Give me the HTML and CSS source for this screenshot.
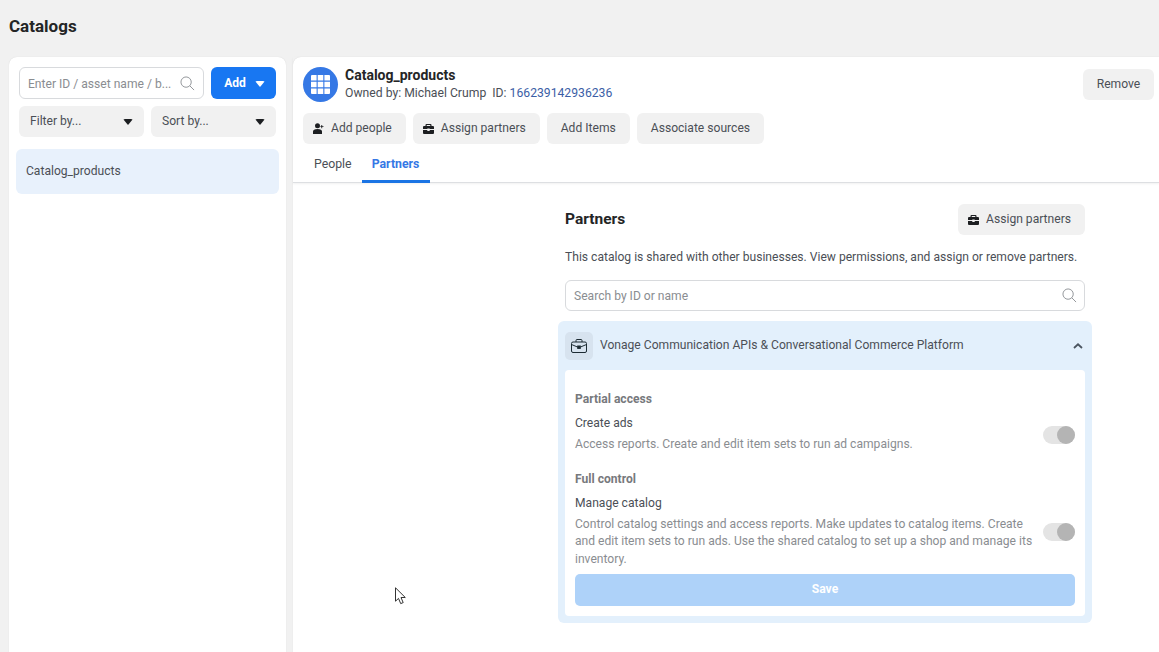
FILE: index.html
```html
<!DOCTYPE html>
<html lang="en">
<head>
    <meta charset="UTF-8">
    <meta name="viewport" content="width=device-width, initial-scale=1.0">
    <title>Catalogs</title>
    <link rel="stylesheet" href="styles.css">
</head>
<body>
    <h1 class="page-title">Catalogs</h1>
    <div class="columns">
        <aside class="side">
            <div class="side-row">
                <div class="search side-search">
                    <span class="placeholder">Enter ID / asset name / b...</span>
                    <svg class="search-icon" width="15" height="15" viewBox="0 0 16 16"><circle cx="6.500" cy="6.500" r="5.500"/><path d="M10.500 10.500L15 15"/></svg>
                </div>
                <button class="btn primary">Add <span class="caret white"></span></button>
            </div>
            <div class="side-row">
                <button class="btn select">Filter by... <span class="caret"></span></button>
                <button class="btn select">Sort by... <span class="caret"></span></button>
            </div>
            <div class="side-item">Catalog_products</div>
        </aside>
        <main class="detail">
            <header class="detail-head">
                <div class="head-top">
                    <div class="asset">
                        <div class="asset-icon">
                            <svg width="19" height="19" viewBox="0 0 19 19"><path fill="#fff" d="M1 0h4.600v5.600H0V1a1 1 0 0 1 1-1zM6.700 0h5.600v5.600H6.700zM13.400 0H18a1 1 0 0 1 1 1v4.600h-5.600zM0 6.700h5.600v5.600H0zM6.700 6.700h5.600v5.600H6.700zM13.400 6.700H19v5.600h-5.600zM0 13.400h5.600V19H1a1 1 0 0 1-1-1zM6.700 13.400h5.600V19H6.700zM13.400 13.400H19V18a1 1 0 0 1-1 1h-4.600z"/></svg>
                        </div>
                        <div class="asset-info">
                            <div class="asset-name">Catalog_products</div>
                            <div class="asset-owner">Owned by: Michael Crump &nbsp;ID: <a class="asset-id">166239142936236</a></div>
                        </div>
                    </div>
                    <button class="btn remove">Remove</button>
                </div>
                <div class="actions">
                    <button class="btn icon-btn">
                        <svg width="11" height="11" viewBox="0 0 11 11"><circle cx="4.500" cy="2.800" r="2.500"/><path d="M0 11V8.600C0 6.900 1.500 6 4.500 6S9 6.900 9 8.600V11zM8.300 2h.9v1.200h1.300v.9H9.200v1.200h-.9V4.100H7.400v-.9h.9z"/></svg>
                        Add people
                    </button>
                    <button class="btn icon-btn">
                        <svg width="11" height="10" viewBox="0 0 11 10"><path fill-rule="evenodd" d="M3.500 0h4a1 1 0 0 1 1 1v1H10a1 1 0 0 1 1 1v2H6.700v-.6H4.300V5H0V3a1 1 0 0 1 1-1h1.500V1a1 1 0 0 1 1-1zm.2 1.100V2h3.600v-.9zM0 6h4.300v1h2.400V6H11v3a1 1 0 0 1-1 1H1a1 1 0 0 1-1-1z"/></svg>
                        Assign partners
                    </button>
                    <button class="btn">Add Items</button>
                    <button class="btn">Associate sources</button>
                </div>
                <nav class="tabs">
                    <a class="tab">People</a>
                    <a class="tab active">Partners</a>
                </nav>
            </header>
            <section class="partners">
                <div class="partners-head">
                    <h2 class="partners-title">Partners</h2>
                    <button class="btn icon-btn">
                        <svg width="11" height="10" viewBox="0 0 11 10"><path fill-rule="evenodd" d="M3.500 0h4a1 1 0 0 1 1 1v1H10a1 1 0 0 1 1 1v2H6.700v-.6H4.300V5H0V3a1 1 0 0 1 1-1h1.500V1a1 1 0 0 1 1-1zm.2 1.100V2h3.600v-.9zM0 6h4.300v1h2.400V6H11v3a1 1 0 0 1-1 1H1a1 1 0 0 1-1-1z"/></svg>
                        Assign partners
                    </button>
                </div>
                <p class="partners-desc">This catalog is shared with other businesses. View permissions, and assign or remove partners.</p>
                <div class="search partner-search">
                    <span class="placeholder">Search by ID or name</span>
                    <svg class="search-icon" width="15" height="15" viewBox="0 0 16 16"><circle cx="6.500" cy="6.500" r="5.500"/><path d="M10.500 10.500L15 15"/></svg>
                </div>
                <div class="accordion">
                    <div class="accordion-head">
                        <div class="case-box">
                            <svg width="16" height="14" viewBox="0 0 16 14" fill="none" stroke="#1c2b33" stroke-width="1"><rect x=".5" y="3" width="15" height="10.500" rx="1.500"/><path d="M5 3V1.500a1 1 0 0 1 1-1h4a1 1 0 0 1 1 1V3M.5 5.500L6.500 8M15.500 5.500L9.500 8"/><rect x="6.700" y="7" width="2.600" height="2.400" fill="#1c2b33"/></svg>
                        </div>
                        <span class="accordion-name">Vonage Communication APIs &amp; Conversational Commerce Platform</span>
                        <svg class="chevron" width="10" height="6" viewBox="0 0 10 6"><path d="M1 5l4-3.700L9 5" fill="none" stroke="#4b5560" stroke-width="1.800"/></svg>
                    </div>
                    <div class="accordion-body">
                        <h3 class="perm-group">Partial access</h3>
                        <div class="perm">
                            <div class="perm-text">
                                <div class="perm-name">Create ads</div>
                                <div class="perm-desc">Access reports. Create and edit item sets to run ad campaigns.</div>
                            </div>
                            <span class="toggle"><span class="knob"></span></span>
                        </div>
                        <h3 class="perm-group second">Full control</h3>
                        <div class="perm">
                            <div class="perm-text">
                                <div class="perm-name">Manage catalog</div>
                                <div class="perm-desc">Control catalog settings and access reports. Make updates to catalog items. Create and edit item sets to run ads. Use the shared catalog to set up a shop and manage its inventory.</div>
                            </div>
                            <span class="toggle"><span class="knob"></span></span>
                        </div>
                        <button class="save">Save</button>
                    </div>
                </div>
            </section>
        </main>
    </div>
    <svg class="cursor" width="12" height="18" viewBox="0 0 12 18"><path d="M.5.800v13.400l3-2.800 2.200 5.200 2.500-1-2.200-5.100h4.300z" fill="#fff" stroke="#333" stroke-width="1"/></svg>
</body>
</html>
```
FILE: styles.css
```css
* {
    box-sizing: border-box;
}
html, body {
    height: 100%;
}
body {
    margin: 0;
    background: #f1f1f1;
    color: #1c2b33;
    font-family: Roboto, "Liberation Sans", sans-serif;
    font-size: 12.100px;
    overflow: hidden;
    display: flex;
    flex-direction: column;
    position: relative;
}
button {
    font-family: inherit;
}
.page-title {
    margin: 0;
    padding: 16px 9px 0;
    height: 57px;
    font-size: 17px;
    line-height: 20px;
    font-weight: 700;
    color: #242526;
}
.columns {
    flex: 1;
    display: flex;
    gap: 7px;
    padding-left: 9px;
    min-height: 0;
}
.side {
    width: 277px;
    background: #fff;
    border-radius: 8px 8px 0 0;
    padding: 10px 7px;
    box-shadow: 0 0 1px rgba(0, 0, 0, .15);
}
.side-row {
    display: flex;
    justify-content: space-between;
    gap: 7px;
    margin: 0 3px 7px;
}
.btn {
    height: 31px;
    border: 0;
    border-radius: 6px;
    background: #f1f1f1;
    color: #4b4f56;
    font-size: 12.100px;
    padding: 0 14px 2px;
    display: inline-flex;
    align-items: center;
    white-space: nowrap;
}
.primary {
    width: 65px;
    height: 32px;
    background: #1877f2;
    color: #fff;
    font-weight: 700;
    justify-content: center;
    padding: 0 0 1px 2px;
}
.select {
    flex: 1;
    justify-content: space-between;
    padding: 0 11px 2px 11px;
}
.caret {
    width: 0;
    height: 0;
    border-left: 5px solid transparent;
    border-right: 5px solid transparent;
    border-top: 6px solid #1c1e21;
    border-radius: 2px;
}
.select .caret {
    margin-top: 2px;
}
.caret.white {
    border-top-color: #fff;
    margin-left: 9px;
    margin-top: 2px;
}
.search {
    display: flex;
    align-items: center;
    justify-content: space-between;
    border: 1px solid #d8dadd;
    border-radius: 6px;
    background: #fff;
}
.side-search {
    flex: 1;
    height: 32px;
    padding: 1px 8px 0 8px;
}
.placeholder {
    color: #8a8d91;
    font-size: 12.100px;
    white-space: nowrap;
}
.search-icon {
    fill: none;
    stroke: #8d9094;
    stroke-width: 1;
    flex: none;
}
.side-item {
    margin-top: 12px;
    height: 45px;
    line-height: 45px;
    padding-left: 10px;
    background: #e8f1fc;
    border-radius: 6px;
    color: #4b4f56;
}
.detail {
    flex: 1;
    background: #fff;
    border-radius: 8px 0 0 0;
    box-shadow: 0 0 1px rgba(0, 0, 0, .15);
    min-width: 0;
}
.detail-head {
    height: 126px;
    padding: 10px 5px 0 10px;
    border-bottom: 1px solid #dddfe2;
    box-shadow: 0 1px 2px rgba(0, 0, 0, .06);
}
.head-top {
    display: flex;
    justify-content: space-between;
    align-items: flex-start;
    height: 46px;
}
.asset {
    display: flex;
    align-items: center;
    gap: 7px;
    height: 35px;
}
.asset-info {
    padding-bottom: 1px;
}
.asset-icon {
    width: 35px;
    height: 35px;
    border-radius: 50%;
    background: #3578e5;
    display: flex;
    align-items: center;
    justify-content: center;
}
.asset-icon svg {
    display: block;
}
.asset-name {
    font-size: 14px;
    font-weight: 700;
    line-height: 17px;
    color: #242526;
}
.asset-owner {
    margin-top: 1px;
    font-size: 12.200px;
    line-height: 17px;
    color: #4b4f56;
}
.asset-id {
    color: #3b5ea6;
}
.remove {
    margin-top: 2px;
    height: 31px;
    width: 71px;
    justify-content: center;
    padding: 0 0 2px;
}
.actions {
    display: flex;
    gap: 7px;
}
.icon-btn {
    padding: 0 14px 2px 10px;
    gap: 7px;
}
.icon-btn svg {
    fill: #1c1e21;
    flex: none;
    margin-top: 2px;
}
.tabs {
    display: flex;
    margin-top: 6px;
    height: 33px;
}
.tab {
    padding: 7px 11px 0;
    color: #4b4f56;
    font-size: 12.300px;
    line-height: 14px;
}
.tab.active {
    margin-left: -1px;
    padding: 7px 10px 0;
    font-weight: 700;
    color: #3578e5;
    border-bottom: 3px solid #1b74e4;
    width: 68px;
}
.partners {
    width: 534px;
    margin-left: 265px;
}
.partners-head {
    display: flex;
    justify-content: space-between;
    align-items: center;
    padding: 21px 7px 0;
}
.partners-title {
    margin: 0;
    padding-bottom: 2px;
    font-size: 15.500px;
    font-weight: 700;
    color: #242526;
}
.partners-desc {
    margin: 15px 7px 16px;
    line-height: 14px;
    color: #4b4f56;
}
.partner-search {
    margin: 0 7px 10px;
    height: 31px;
    padding: 0 7px 0 8px;
}
.accordion {
    background: #e3f0fc;
    border-radius: 6px;
    padding: 0 7px 7px;
    height: 302px;
}
.accordion-head {
    height: 49px;
    display: flex;
    align-items: center;
}
.case-box {
    width: 28px;
    height: 28px;
    border-radius: 5px;
    background: #d7e3ef;
    display: flex;
    align-items: center;
    justify-content: center;
}
.case-box svg {
    display: block;
}
.accordion-name {
    margin-left: 7px;
    padding-bottom: 2px;
    color: #4b4f56;
}
.chevron {
    margin-left: auto;
    margin-right: 2px;
}
.accordion-body {
    background: #fff;
    border-radius: 4px;
    padding: 22px 10px 0;
    height: 246px;
}
.perm-group {
    margin: 0;
    font-size: 12.100px;
    line-height: 14px;
    font-weight: 700;
    color: #77797d;
}
.perm-group.second {
    margin-top: 18px;
}
.perm {
    display: flex;
    align-items: center;
    justify-content: space-between;
    margin-top: 10px;
}
.perm-text {
    width: 462px;
}
.perm-name {
    line-height: 14px;
    color: #4b4f56;
    margin-bottom: 6px;
}
.perm-desc {
    line-height: 17.500px;
    color: #8a8d91;
}
.toggle {
    width: 32px;
    height: 18px;
    border-radius: 9px;
    background: #e4e4e4;
    display: flex;
    justify-content: flex-end;
}
.knob {
    width: 18px;
    height: 18px;
    border-radius: 50%;
    background: #b4b4b4;
}
.save {
    display: block;
    width: 100%;
    height: 31.500px;
    margin-top: 6px;
    border: 0;
    border-radius: 5px;
    background: #aed2f9;
    color: #fff;
    font-size: 12.100px;
    font-weight: 700;
    padding: 0 0 2px;
}
.cursor {
    position: absolute;
    left: 395px;
    top: 587px;
}
```
